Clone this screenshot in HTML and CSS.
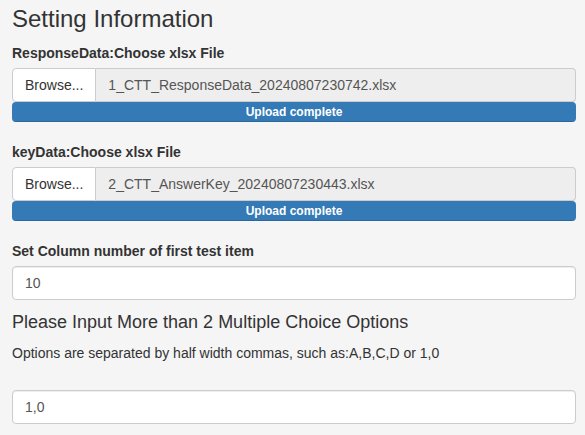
FILE: index.html
```html
<!DOCTYPE html>
<html>
<head>
<meta charset="utf-8">
<link rel="stylesheet" href="styles.css">
</head>
<body>
<div class="panel">
  <h3 class="title">Setting Information</h3>

  <div class="file-group">
    <label class="label">ResponseData:Choose xlsx File</label>
    <div class="input-group">
      <span class="browse">Browse...</span>
      <span class="filename">1_CTT_ResponseData_20240807230742.xlsx</span>
    </div>
    <div class="progress"><div class="bar">Upload complete</div></div>
  </div>

  <div class="file-group">
    <label class="label">keyData:Choose xlsx File</label>
    <div class="input-group">
      <span class="browse">Browse...</span>
      <span class="filename">2_CTT_AnswerKey_20240807230443.xlsx</span>
    </div>
    <div class="progress"><div class="bar">Upload complete</div></div>
  </div>

  <div class="text-group">
    <label class="label">Set Column number of first test item</label>
    <div class="control">10</div>
  </div>

  <h4 class="subtitle">Please Input More than 2 Multiple Choice Options</h4>
  <p class="help">Options are separated by half width commas, such as:A,B,C,D or 1,0</p>
  <div class="options-group">
    <div class="control">1,0</div>
  </div>
</div>
</body>
</html>
```

FILE: styles.css
```css
* { box-sizing: border-box; }
html, body {
  margin: 0;
  background: #f5f5f5;
}
body {
  font-family: "Liberation Sans", Arial, sans-serif;
  font-size: 14px;
  line-height: 20px;
  color: #333;
}
.panel {
  padding: 6px 9px 0 12px;
  width: 585px;
}
.title {
  margin: 0 0 11px;
  font-size: 24px;
  font-weight: 500;
  line-height: 26.4px;
}
.label {
  display: block;
  font-weight: bold;
  margin-bottom: 5px;
}
.file-group {
  margin-bottom: 20px;
}
.input-group {
  display: flex;
  height: 34px;
}
.browse {
  background: #fff;
  border: 1px solid #ccc;
  border-radius: 4px 0 0 4px;
  padding: 6px 12px;
  color: #333;
}
.filename {
  flex: 1;
  background: #eee;
  border: 1px solid #ccc;
  border-left: none;
  border-radius: 0 4px 4px 0;
  padding: 6px 12px;
  color: #555;
}
.progress {
  height: 20px;
  background: #f5f5f5;
  border-radius: 4px;
  overflow: hidden;
}
.bar {
  height: 100%;
  background: #337ab7;
  color: #fff;
  font-size: 12px;
  font-weight: bold;
  line-height: 20px;
  text-align: center;
  box-shadow: inset 0 -1px 0 rgba(0,0,0,0.15);
}
.control {
  height: 34px;
  background: #fff;
  border: 1px solid #ccc;
  border-radius: 4px;
  padding: 6px 12px;
  color: #555;
  box-shadow: inset 0 1px 1px rgba(0,0,0,0.075);
}
.subtitle {
  margin: 12.6px 0 10px;
  font-size: 18px;
  font-weight: 500;
  line-height: 19.8px;
}
.help {
  margin: 0 0 27px;
}
```
